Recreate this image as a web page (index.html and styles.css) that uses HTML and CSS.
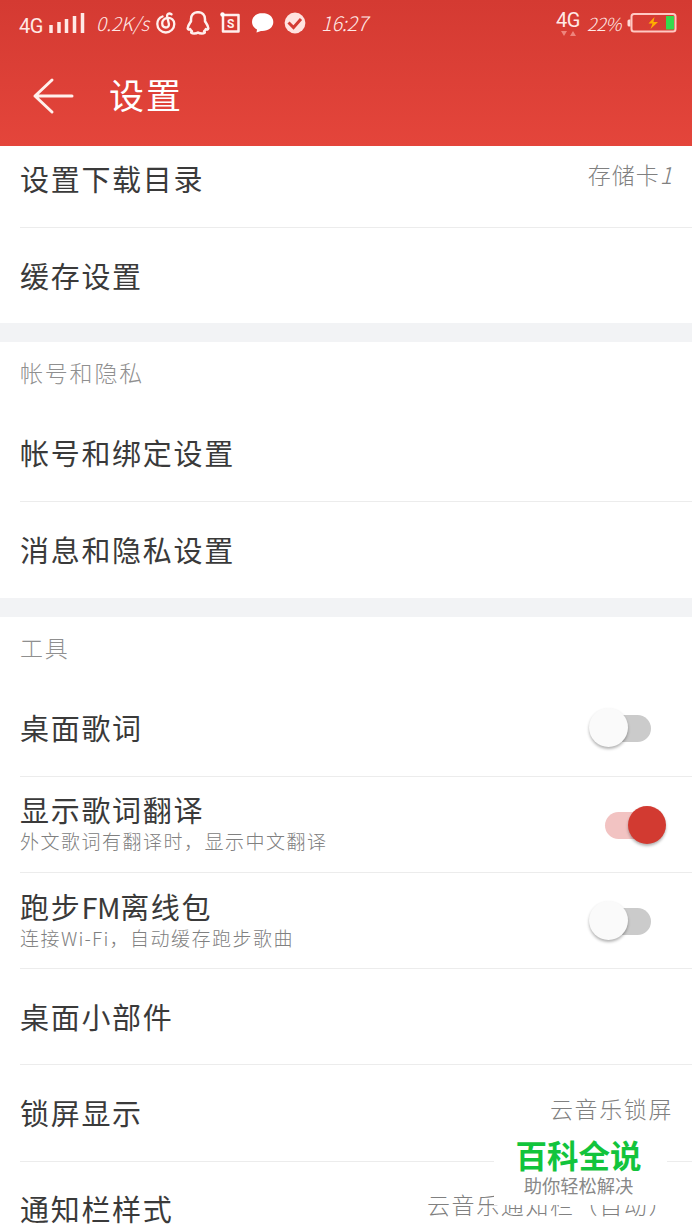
FILE: index.html
```html
<!DOCTYPE html>
<html lang="zh-CN">
<head>
    <meta charset="utf-8">
    <title>设置</title>
    <link rel="stylesheet" href="styles.css">
</head>

<body>
    <header>
        <div class="status">
            <span class="net">4G</span>
            <svg class="signal" width="36" height="22" viewBox="0 0 36 22">
                <path d="M2 21v-8M10 21V10M17.500 21V7M25.500 21V4M33.500 21V1"></path>
            </svg>
            <span class="speed">0.2K/s</span>
            <svg class="line music" width="20" height="22" viewBox="0 0 20 22">
                <path d="M6.500 4.500C3.200 5.700 1.300 8.700 1.300 12a8.400 8.400 0 0 0 17 0c0-3.800-3-6.300-6.500-6-3.300.2-5.600 2.400-5.600 5.300 0 2.500 1.500 4.200 3.700 4.200 2.300 0 3.400-1.800 2.900-4L11.200 4.800C10.600 1.800 13 .6 15.500 2.300"></path>
            </svg>
            <svg class="line qq" width="24" height="24" viewBox="0 0 24 24">
                <path d="M12 1.200c-4.500 0-7 3-7 7v2C3.500 12.500 1.500 15 1.700 17.500c.1 1.500 1.500 1.300 2.500.6.400 1 1 1.600 1.700 2.200-1.500 1.300-.4 2.200 2.300 2.200 1.700 0 3-.4 3.800-1 .8.600 2.100 1 3.800 1 2.700 0 3.800-.9 2.300-2.200.7-.6 1.300-1.200 1.700-2.200 1 .7 2.400.9 2.500-.6.200-2.500-1.800-5-3.300-7.300v-2c0-4-2.500-7-7-7z"></path>
            </svg>
            <svg class="line box" width="21" height="22" viewBox="0 0 21 22">
                <path d="M3 3h15.500v16.500H3z"></path>
                <circle class="solid" cx="2.500" cy="2.500" r="2.200"></circle>
                <text x="10.700" y="16">S</text>
            </svg>
            <svg class="chat" width="23" height="22" viewBox="0 0 23 22">
                <path class="solid" d="M11.500 1C5.500 1 1 4.800 1 10c0 3.300 1.900 6 5 7.500L5.500 20.500 10 19c7 .500 12.300-3.500 12.300-9 0-5.200-4.800-9-10.800-9z"></path>
            </svg>
            <svg class="check" width="22" height="22" viewBox="0 0 22 22">
                <circle cx="11" cy="11" r="10.400"></circle>
                <path d="M4.500 10.500l5 5 7.500-8.500"></path>
            </svg>
            <span class="clock">16:27</span>
            <span class="net right">4G</span>
            <svg class="data" width="16" height="7" viewBox="0 0 16 7">
                <path d="M0 1h6L3 6zM9 6h6l-3-5z"></path>
            </svg>
            <span class="percent">22%</span>
            <svg class="battery" width="51" height="22" viewBox="0 0 51 22">
                <path class="cap" d="M3.500 7.500H2a1.500 1.500 0 0 0-1.500 1.500v4A1.500 1.500 0 0 0 2 14.500h1.500z"></path>
                <rect class="shell" x="4.500" y="2" width="44" height="17.500" rx="2.500"></rect>
                <path class="level" d="M39 4h8v13.500h-8z"></path>
                <path class="bolt" d="M27.500 5l-6 6.500h4l-2 5.500 7.500-7h-4.500z"></path>
            </svg>
        </div>
        <div class="bar">
            <svg class="back" width="42" height="38" viewBox="0 0 42 38">
                <path d="M20 3L3 19l17 16M3 19h37"></path>
            </svg>
            <h1>设置</h1>
        </div>
    </header>

    <main>
        <section class="first">
            <div class="row"><span class="label">设置下载目录</span><span class="value card">存储卡<i>1</i></span></div>
            <div class="row"><span class="label">缓存设置</span></div>
        </section>
        <section>
            <h2>帐号和隐私</h2>
            <div class="row"><span class="label">帐号和绑定设置</span></div>
            <div class="row"><span class="label">消息和隐私设置</span></div>
        </section>
        <section>
            <h2>工具</h2>
            <div class="row"><span class="label">桌面歌词</span><span class="toggle"></span></div>
            <div class="row">
                <div>
                    <span class="label">显示歌词翻译</span>
                    <p>外文歌词有翻译时，显示中文翻译</p>
                </div>
                <span class="toggle on"></span>
            </div>
            <div class="row">
                <div>
                    <span class="label">跑步<span class="latin">FM</span>离线包</span>
                    <p>连接<span class="wifi">Wi-Fi</span>，自动缓存跑步歌曲</p>
                </div>
                <span class="toggle"></span>
            </div>
            <div class="row"><span class="label">桌面小部件</span></div>
            <div class="row"><span class="label">锁屏显示</span><span class="value">云音乐锁屏</span></div>
            <div class="row"><span class="label">通知栏样式</span><span class="value">云音乐通知栏（自动）</span></div>
        </section>
    </main>

    <aside>
        <b>百科全说</b>
        <span>助你轻松解决</span>
    </aside>
</body>
</html>
```
FILE: styles.css
```css
* {
    box-sizing: border-box;
}
body {
    position: relative;
    width: 692px;
    height: 1230px;
    margin: 0;
    overflow: hidden;
    font-family: "Noto Sans CJK SC", sans-serif;
    font-weight: 300;
    color: #3a3a3a;
    background: #fff;
}

header {
    position: relative;
    z-index: 1;
    height: 146px;
    color: #fff;
    background: linear-gradient(#d43a32, #e4453b);
}
svg {
    flex: none;
    fill: none;
}
.status {
    display: flex;
    align-items: center;
    height: 46px;
    padding-left: 19px;
    color: #ffe9e6;
    white-space: nowrap;
}
.status span {
    flex: none;
    line-height: 24px;
}
.status .net {
    width: 30px;
    font: 20px/24px Roboto, sans-serif;
    letter-spacing: -0.5px;
    padding-top: 6px;
}
.signal {
    stroke: #ffe9e6;
    stroke-width: 3.5px;
}
.speed {
    width: 60px;
    margin-left: 11px;
    font-size: 19px;
    font-style: italic;
}
.line {
    stroke: #fff0ee;
    stroke-width: 2.5px;
    stroke-linejoin: round;
    stroke-linecap: round;
}
.music {
    stroke-width: 2.3px;
}
.solid {
    fill: #fff;
    stroke: none;
}
.qq {
    margin-left: 10px;
}
.box {
    margin-left: 10px;
}
.box text {
    font: bold 12px Roboto, sans-serif;
    text-anchor: middle;
    fill: #fff0ee;
    stroke: none;
}
.chat {
    margin-left: 10px;
}
.check {
    margin-left: 10px;
}
.check circle {
    fill: #ffe3e0;
}
.check path {
    stroke: #d43b33;
    stroke-width: 3px;
}
.clock {
    width: 60px;
    margin-left: 15px;
    font-size: 20px;
    font-style: italic;
    letter-spacing: -0.3px;
}
.status .right {
    width: 25px;
    margin-left: auto;
    padding: 0 0 6px;
}
.data {
    align-self: flex-end;
    margin: 0 10px 9px -20px;
    fill: #ee857d;
}
.percent {
    width: 40px;
    font-size: 18px;
    font-style: italic;
    letter-spacing: -0.5px;
}
.battery {
    margin-right: 14px;
}
.cap {
    fill: #ffdcd8;
}
.shell {
    stroke: #ffc9c3;
    stroke-width: 2px;
}
.level {
    fill: #35d94d;
}
.bolt {
    fill: #ffae00;
}

.bar {
    display: flex;
    align-items: center;
    height: 100px;
    padding-left: 32px;
}
.back {
    stroke: #fff0ec;
    stroke-width: 3px;
    stroke-linecap: round;
    stroke-linejoin: round;
}
h1 {
    margin: -5px 0 0 35px;
    font-size: 35px;
    font-weight: 400;
    letter-spacing: 2px;
}

.first {
    margin-top: -15px;
}
section + section {
    border-top: 19px solid #f2f3f5;
}
h2 {
    height: 63px;
    margin: 0;
    padding-left: 20px;
    font-size: 23px;
    font-weight: 300;
    line-height: 60px;
    letter-spacing: 1.8px;
    color: #8f8f8f;
}
.row {
    display: flex;
    align-items: center;
    justify-content: space-between;
    height: 96px;
    margin-left: 20px;
    padding: 0 20px 2px 0;
}
.row + .row {
    height: 96.3px;
    border-top: 1px solid #ececec;
}
.label {
    display: block;
    font-size: 29px;
    font-weight: 400;
    line-height: 36px;
    letter-spacing: 1.7px;
}
.latin {
    letter-spacing: -0.4px;
}
.row p {
    margin: 0;
    font-size: 19px;
    line-height: 28px;
    letter-spacing: 1.5px;
    color: #808080;
}
.row .wifi {
    letter-spacing: 1.2px;
}
.value {
    margin-bottom: 9px;
    margin-right: -1px;
    font-size: 23px;
    letter-spacing: 1.6px;
    color: #808080;
}
.card {
    margin-right: 2px;
    letter-spacing: 1px;
}
.card i {
    letter-spacing: -2px;
}

.toggle {
    position: relative;
    width: 78px;
    height: 40px;
    margin-right: 5px;
}
.toggle::before {
    content: "";
    position: absolute;
    top: 8px;
    left: 16px;
    width: 46px;
    height: 27px;
    border-radius: 14px;
    background: #cbcbcb;
}
.toggle::after {
    content: "";
    position: absolute;
    top: 1px;
    left: 0;
    width: 39px;
    height: 39px;
    border-radius: 50%;
    background: #fafafa;
    box-shadow: 0 2px 3px rgba(0, 0, 0, 0.3);
}
.toggle.on::before {
    top: 9px;
    background: #f2c3c2;
}
.toggle.on::after {
    top: 3px;
    left: 39px;
    width: 38px;
    height: 38px;
    background: #d23a31;
}

/* floating watermark, covers the last value */
aside {
    position: absolute;
    top: 1126px;
    left: 494px;
    z-index: 2;
    display: flex;
    flex-direction: column;
    align-items: center;
    width: 173px;
    height: 79px;
    padding-right: 4px;
    background: #fff;
}
aside b {
    margin-top: 9px;
    font-size: 31.5px;
    font-weight: 700;
    line-height: 38px;
    color: #12c43c;
}
aside span {
    margin-top: 2px;
    font-size: 18.3px;
    font-weight: 400;
    line-height: 20px;
    color: #888;
}
```
